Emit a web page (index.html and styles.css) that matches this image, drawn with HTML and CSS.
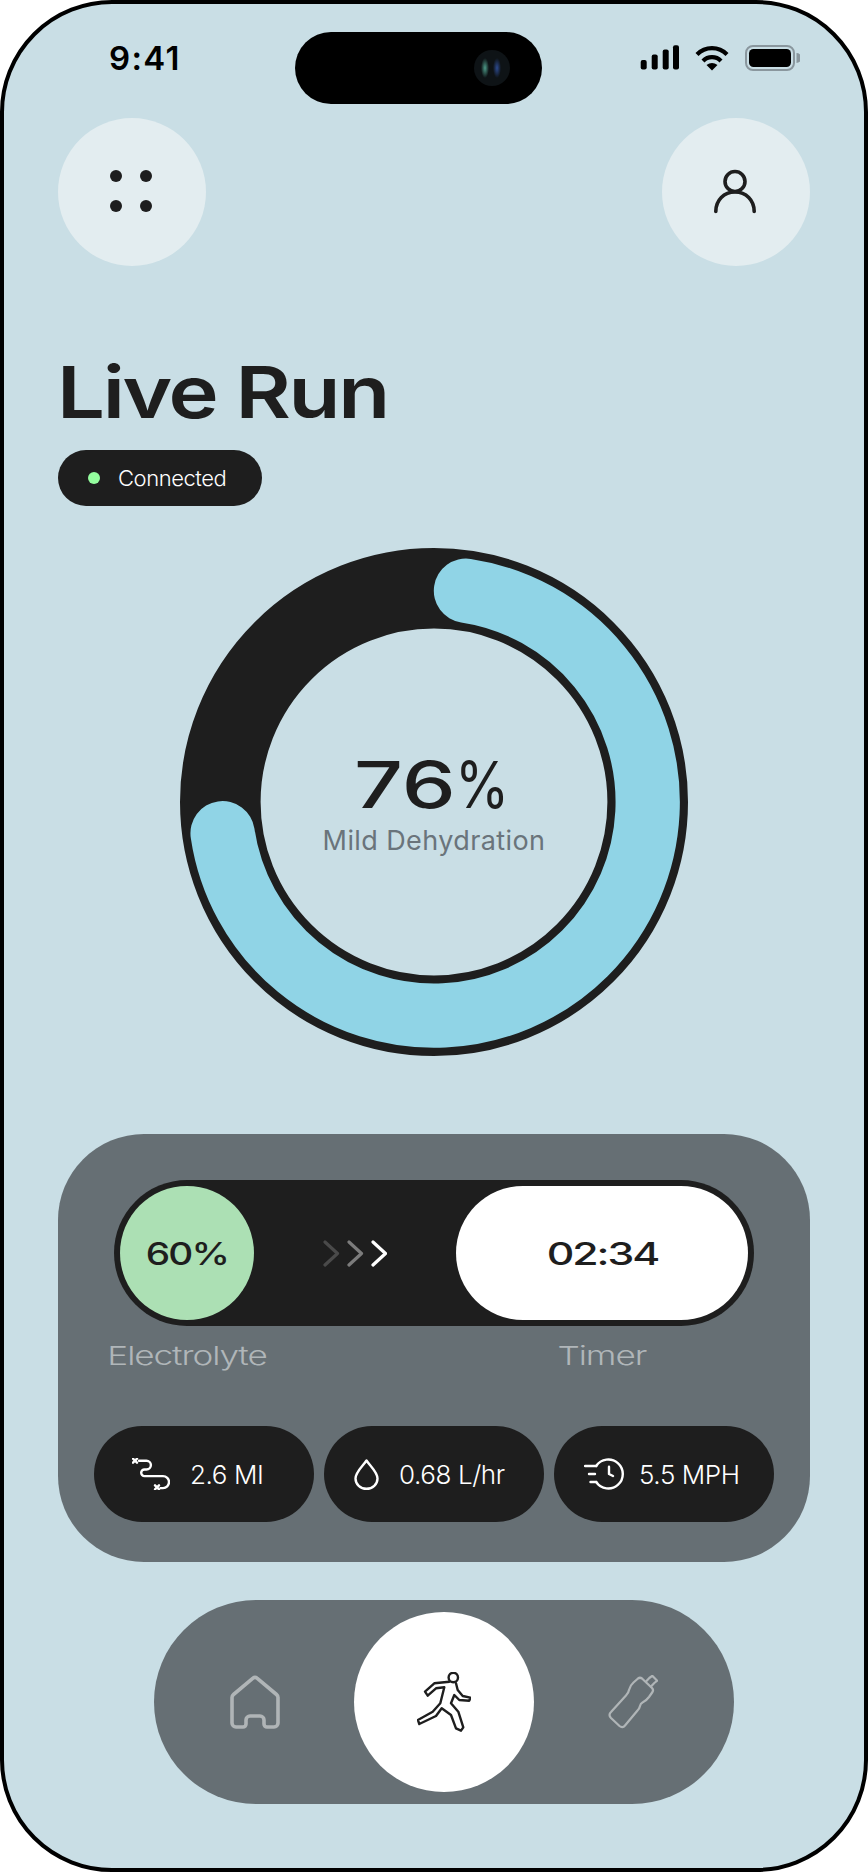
FILE: index.html
```html
<!DOCTYPE html>
<html lang="en">
<head>
<meta charset="utf-8">
<title>Live Run</title>
<link rel="stylesheet" href="styles.css">
</head>
<body>
<main class="phone">
  <div class="status">
    <span class="time">9:41</span>
    <div class="island"><span class="camera"></span></div>
    <div class="status-icons">
      <svg class="signal" width="39" height="25" viewBox="0 0 39 25"><rect x="0.7" y="15" width="6" height="9.5" rx="2"/><rect x="11.7" y="9.5" width="6" height="15" rx="2"/><rect x="22.7" y="4.5" width="6" height="20" rx="2"/><rect x="33" y="0.2" width="6" height="24.3" rx="2"/></svg>
      <svg class="wifi" width="34" height="26" viewBox="0 0 34 26"><path class="wifi-arc" d="M2 9.5A21 21 0 0 1 32 9.5"/><path class="wifi-arc" d="M8 16A12.5 12.5 0 0 1 26 16"/><path d="M17 25.5 11.5 20Q17 16 22.5 20Z"/></svg>
      <svg class="battery" width="55" height="26" viewBox="0 0 55 26"><rect class="battery-shell" x="1" y="1" width="48" height="24" rx="7"/><rect x="4" y="4" width="42" height="18" rx="4.5"/><path class="battery-cap" d="M51.5 8a5 5 0 0 1 0 10Z"/></svg>
    </div>
  </div>

  <header class="topbar">
    <button class="round-btn" type="button" aria-label="Menu">
      <svg width="42" height="42" viewBox="0 0 42 42"><circle cx="5" cy="5" r="6"/><circle cx="35" cy="5" r="6"/><circle cx="5" cy="35" r="6"/><circle cx="35" cy="35" r="6"/></svg>
    </button>
    <button class="round-btn" type="button" aria-label="Profile">
      <svg class="line-dark" width="42" height="42" viewBox="0 1 42 42"><circle cx="20" cy="11.5" r="10"/><path d="M.8 41.5C.8 30 9 22 20 22S39.2 30 39.2 41.5"/></svg>
    </button>
  </header>

  <h1 class="title">Live Run</h1>
  <div class="connected"><span class="dot"></span>Connected</div>

  <section class="ring">
    <svg class="ring-art" width="508" height="508" viewBox="0 0 508 508">
      <circle class="ring-track" cx="254" cy="254" r="213.7"/>
      <path class="ring-value" d="M285.96 42.7A213.7 213.7 0 1 1 42.6 285.2"/>
    </svg>
    <div class="readout">
      <div class="big"><span class="big-num">76</span><span class="big-pct">%</span></div>
      <div class="sub">Mild Dehydration</div>
    </div>
  </section>

  <section class="panel">
    <div class="track">
      <div class="knob"><span class="knob-text">60%</span></div>
      <svg class="chevrons" width="64" height="27" viewBox="0 0 64 27"><path class="c1" d="M2 2 14.5 13.5 2 25"/><path class="c2" d="M26 2 38.5 13.5 26 25"/><path class="c3" d="M50 2 62.5 13.5 50 25"/></svg>
      <div class="timer"><span class="timer-text">02:34</span></div>
    </div>
    <div class="labels">
      <span class="label">Electrolyte</span>
      <span class="label label-timer">Timer</span>
    </div>
    <div class="stats">
      <div class="stat stat-route">
        <svg class="line-white" width="38" height="32" viewBox="0 0 38 32"><path d="M7 2.7H14.5a4.4 4.4 0 0 1 0 8.8H12.5a3.3 3.3 0 0 0 0 6.6H31a6 6 0 0 1 0 12H28.5"/><path d="M1 .7 5 4.7M5 .7 1 4.7M23 27.3 27 31.3M27 27.3 23 31.3"/></svg>
        <span>2.6 MI</span>
      </div>
      <div class="stat stat-drop">
        <svg class="line-white" width="25" height="31" viewBox="0 0 25 31"><path d="M12.5 1.5C9 7 1.5 13 1.5 19.5a11 10.3 0 0 0 22 0C23.5 13 16 7 12.5 1.5Z"/></svg>
        <span>0.68 L/hr</span>
      </div>
      <div class="stat stat-speed">
        <svg class="line-white" width="40" height="32" viewBox="0 0 40 32"><path d="M12.2 8A14.5 14.5 0 1 1 12.2 24"/><path d="M1 8H12.2M5 16H11M6.5 24H12.2M25 8.7V16L29 18"/></svg>
        <span>5.5 MPH</span>
      </div>
    </div>
  </section>

  <nav class="nav">
    <svg class="line-grey" width="50" height="54" viewBox="0 0 50 54"><path d="M23 3.2a3 3 0 0 1 4 0L46.5 19.5a4 4 0 0 1 1.5 3V48a4 4 0 0 1-4 4H37a3 3 0 0 1-3-3V45a4 4 0 0 0-4-4H20a4 4 0 0 0-4 4v4a3 3 0 0 1-3 3H6a4 4 0 0 1-4-4V22.5a4 4 0 0 1 1.5-3Z"/></svg>
    <div class="nav-active">
      <svg class="runner" width="54" height="60" viewBox="0 0 54 60"><circle cx="36.3" cy="5.5" r="4.7"/><path d="M32.3 9.7 17.3 11.3 8 19.7 10.7 23.7 19 16.3 27.3 15.3 23.3 31.3 15.7 39.7 .9 48 2.3 52 19 44 24.7 36.3 34 43 39 56.3 44 58.7 46.3 55.3 41.3 39.7 34 31.3 37.3 23 42.3 28 52.3 28.7 53.3 25.7 45.7 24 40.7 18 39 11.3"/></svg>
    </div>
    <svg class="bottle" width="50" height="54" viewBox="0 0 50 54"><path d="M3 37 18 20.5Q20.5 18 21 15 22 10.5 25.5 7.5L30 3.5Q32 2 34 3.5L44 13Q45.8 15 44.5 17L41 22Q38 26 34.5 27.5 32.5 28.5 32 31 31.5 33.5 29.5 35.5L17 50.5Q14.5 53.5 11.5 51L3 43Q0 40 3 37Z"/><path d="M38.5 6 41.3 3 44.3.8 49.2 5.7 46.3 8 43 11.5"/></svg>
  </nav>
</main>
</body>
</html>
```

FILE: styles.css
```css
* { box-sizing: border-box; }
html, body { margin: 0; padding: 0; background: #fff; }
body { font-family: Inter, "Liberation Sans", sans-serif; color: #1e1e1e; }

.phone {
  width: 868px;
  height: 1872px;
  border: 4px solid #000;
  border-radius: 112px;
  background: #c9dee5;
  overflow: hidden;
}

.status {
  display: flex;
  align-items: flex-start;
  padding: 28px 64px 0 105px;
  height: 100px;
}
.time {
  width: 185.5px;
  margin-top: 6px;
  font-size: 33px;
  line-height: 40px;
  font-weight: 600;
  letter-spacing: 1.3px;
  color: #000;
}
.island {
  width: 247px;
  height: 72px;
  border-radius: 36px;
  background: #000;
  display: flex;
  align-items: center;
  justify-content: flex-end;
  padding-right: 32px;
}
.camera {
  width: 36px;
  height: 36px;
  border-radius: 50%;
  background:
    radial-gradient(ellipse 4px 10px at 11px 18px, #4d9a88, transparent),
    radial-gradient(ellipse 4px 10px at 23px 18px, #2c4a8f, transparent),
    #0e1316;
}
.status-icons {
  margin-left: auto;
  margin-top: 13px;
  display: flex;
  align-items: flex-start;
  gap: 16px;
}
.status-icons svg { display: block; fill: #000; }
.wifi-arc { fill: none; stroke: #000; stroke-width: 4.2; }
.battery-shell { fill: none; stroke: #8a979e; stroke-width: 2; }
.status-icons .battery-cap { fill: #8a979e; }

.topbar {
  display: flex;
  justify-content: space-between;
  padding: 0 54px;
  margin-top: 14px;
}
.round-btn {
  width: 148px;
  height: 148px;
  border: 0;
  padding: 0;
  border-radius: 50%;
  background: #e3edf0;
  display: flex;
  align-items: center;
  justify-content: center;
}
.round-btn svg { fill: #1e1e1e; display: block; overflow: visible; }
.round-btn .line-dark { fill: none; stroke: #1e1e1e; stroke-width: 3.6; stroke-linecap: round; }

.title {
  margin: 90px 0 0 53px;
  font-size: 72px;
  line-height: 72px;
  font-weight: 600;
  letter-spacing: -2px;
  white-space: nowrap;
  width: max-content;
  transform: scaleX(1.18);
  transform-origin: left center;
}

.connected {
  margin: 22px 0 0 54px;
  width: 204px;
  height: 56px;
  border-radius: 28px;
  background: #1e1e1e;
  color: #fff;
  display: flex;
  align-items: center;
  gap: 18px;
  padding-left: 30px;
  font-size: 22px;
  font-weight: 300;
  letter-spacing: -.45px;
}
.dot { width: 12px; height: 12px; border-radius: 50%; background: #94fd9e; }

.ring {
  margin: 42px 0 0 176px;
  width: 508px;
  height: 508px;
  display: grid;
}
.ring > * { grid-area: 1 / 1; }
.ring-art { display: block; fill: none; }
.ring-track { stroke: #1e1e1e; stroke-width: 80.6; }
.ring-value { stroke: #90d4e6; stroke-width: 64.3; stroke-linecap: round; }
.readout {
  justify-self: center;
  padding-top: 204px;
  text-align: center;
}
.big {
  font-size: 65px;
  line-height: 65px;
  display: flex;
  justify-content: center;
  padding-left: 5px;
}
.big-num {
  display: inline-block;
  font-weight: 500;
  transform: scaleX(1.32);
  transform-origin: left center;
  margin-right: 24px;
}
.big-pct {
  display: inline-block;
  font-weight: 400;
  transform: scaleX(.85);
  transform-origin: left center;
}
.sub {
  margin-top: 8px;
  font-size: 27px;
  line-height: 32px;
  color: #6a747b;
  letter-spacing: .4px;
  white-space: nowrap;
}

.panel {
  margin: 78px 0 0 54px;
  width: 752px;
  height: 428px;
  border-radius: 86px;
  background: #666f74;
  padding: 46px 36px 0;
}
.track {
  margin: 0 20px;
  height: 146px;
  padding: 6px;
  border-radius: 73px;
  background: #1e1e1e;
  display: flex;
  align-items: center;
  justify-content: space-between;
}
.knob, .timer {
  height: 134px;
  border-radius: 67px;
  display: flex;
  align-items: center;
  justify-content: center;
}
.knob { width: 134px; background: #ace0b4; }
.timer { width: 292px; background: #fff; }
.knob-text, .timer-text {
  display: inline-block;
  font-size: 31px;
  font-weight: 500;
  letter-spacing: -1.5px;
}
.knob-text { transform: scaleX(1.25); }
.timer-text { transform: scaleX(1.38); }
.chevrons { display: block; fill: none; stroke-width: 3.2; stroke-linecap: round; stroke-linejoin: round; }
.c1 { stroke: #4a4a4a; }
.c2 { stroke: #7c7c7c; }
.c3 { stroke: #fff; }

.labels {
  display: grid;
  grid-template-columns: 146px 196px 292px;
  margin: 14px 20px 0;
  font-size: 26px;
  line-height: 32px;
  font-weight: 300;
  letter-spacing: -.8px;
  color: #b0b6b9;
}
.label {
  justify-self: center;
  white-space: nowrap;
  transform: scaleX(1.35);
}
.label-timer { grid-column: 3; }

.stats {
  display: flex;
  gap: 10px;
  margin-top: 54px;
}
.stat {
  flex: none;
  width: 220px;
  height: 96px;
  border-radius: 48px;
  background: #1e1e1e;
  color: #fff;
  display: flex;
  align-items: center;
  font-size: 26px;
  font-weight: 300;
  letter-spacing: -.4px;
  white-space: nowrap;
}
.stat-route { padding-left: 38px; gap: 20px; }
.stat-drop { padding-left: 30px; gap: 20px; }
.stat-speed { padding-left: 30px; gap: 15px; }
.line-white { fill: none; stroke: #fff; stroke-width: 2.4; stroke-linecap: round; stroke-linejoin: round; flex: none; }

.nav {
  margin: 38px 0 0 150px;
  width: 580px;
  height: 204px;
  border-radius: 102px;
  background: #666f74;
  display: flex;
  align-items: center;
  justify-content: center;
  gap: 74px;
}
.nav-active {
  width: 180px;
  height: 180px;
  border-radius: 50%;
  background: #fff;
  display: flex;
  align-items: center;
  justify-content: center;
}
.line-grey { fill: none; stroke: #b0b5b7; stroke-width: 3.6; stroke-linejoin: round; }
.runner { fill: none; stroke: #1e1e1e; stroke-width: 2.4; stroke-linejoin: round; stroke-linecap: round; }
.bottle { fill: none; stroke: #b0b5b7; stroke-width: 2.2; stroke-linejoin: round; stroke-linecap: round; }
```
